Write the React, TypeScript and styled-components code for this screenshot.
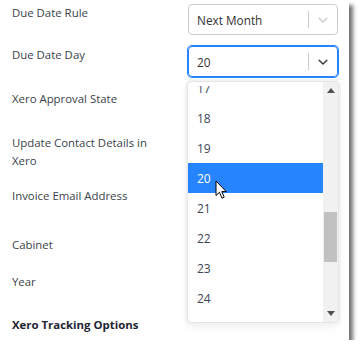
import { createGlobalStyle, styled } from "styled-components";

const GlobalStyle = createGlobalStyle`
  html, body {
    margin: 0;
    padding: 0;
    background: #ffffff;
  }
  body {
    font-family: "Open Sans", "Noto Sans", sans-serif;
  }
`;

const Panel = styled.div`
  width: 349px;
  height: 340px;
  background: #ffffff;
  box-shadow: 4px 5px 4px rgba(0, 0, 0, 0.55);
  box-sizing: border-box;
  padding: 4px 0 0 12px;
  overflow: hidden;
`;

const Field = styled.div<{ $h: number }>`
  display: grid;
  grid-template-columns: 176px 150px;
  align-items: start;
  height: ${(p) => p.$h}px;
`;

const Label = styled.div<{ $bold?: boolean }>`
  font-size: 11.4px;
  line-height: 18px;
  color: ${(p) => (p.$bold ? "#1e2433" : "#3a3f4a")};
  font-weight: ${(p) => (p.$bold ? 700 : 400)};
  width: 150px;
`;

const ControlCell = styled.div`
  position: relative;
`;

const SelectBox = styled.div<{ $focused?: boolean }>`
  height: 31px;
  box-sizing: border-box;
  border: 1px solid ${(p) => (p.$focused ? "#2684ff" : "#cccccc")};
  box-shadow: ${(p) => (p.$focused ? "0 0 0 1px #2684ff" : "none")};
  border-radius: 4px;
  display: flex;
  align-items: center;
  padding-left: 8px;
  font-size: 11.8px;
  color: #333;
`;

const SelectValue = styled.span`
  flex: 1;
`;

const Separator = styled.span`
  width: 1px;
  align-self: stretch;
  margin: 6px 0;
  background: #cccccc;
`;

const Indicator = styled.span<{ $dark?: boolean }>`
  width: 28px;
  display: flex;
  justify-content: center;
  align-items: center;
  color: ${(p) => (p.$dark ? "#333" : "#cccccc")};
`;

const Menu = styled.div`
  position: absolute;
  top: 36px;
  left: 0;
  width: 150px;
  height: 240px;
  background: #fff;
  border-radius: 4px;
  box-shadow: 0 0 0 1px #e4e4e4, 0 0 0 3px #f3f3f3, 0 4px 8px rgba(0, 0, 0, 0.08);
  display: flex;
  overflow: hidden;
  z-index: 2;
`;

const Viewport = styled.div`
  flex: 1;
  margin-top: 4px;
  overflow: hidden;
`;

const OptionList = styled.div`
  margin-top: -13px;
`;

const Option = styled.div<{ $active?: boolean }>`
  height: 30px;
  display: flex;
  align-items: center;
  padding-left: 9px;
  font-size: 12px;
  background: ${(p) => (p.$active ? "#2684ff" : "transparent")};
  color: ${(p) => (p.$active ? "#ffffff" : "#3d4656")};
`;

const Scrollbar = styled.div`
  width: 15px;
  background: #f1f1f1;
  display: flex;
  flex-direction: column;
`;

const ScrollArrow = styled.div`
  height: 17px;
  display: flex;
  align-items: center;
  justify-content: center;
`;

const Track = styled.div`
  flex: 1;
`;

const Thumb = styled.div`
  margin: 113px 1px 0 1px;
  height: 50px;
  background: #c1c1c1;
`;

const Cursor = styled.svg`
  position: absolute;
  left: 27px;
  top: 134px;
  z-index: 3;
`;

const Chevron = () => (
  <svg width="14" height="14" viewBox="0 0 20 20">
    <path
      d="M4.5 7.5 L10 13 L15.5 7.5"
      fill="none"
      stroke="currentColor"
      strokeWidth="2"
      strokeLinecap="round"
      strokeLinejoin="round"
    />
  </svg>
);

const Triangle = ({ up }: { up?: boolean }) => (
  <svg width="8" height="5" viewBox="0 0 8 5">
    <path d={up ? "M0 5 L4 0 L8 5 Z" : "M0 0 L8 0 L4 5 Z"} fill="#505050" />
  </svg>
);

const days = [17, 18, 19, 20, 21, 22, 23, 24, 25];

export default function App() {
  return (
    <>
      <GlobalStyle />
      <Panel>
        <Field $h={42}>
          <Label>Due Date Rule</Label>
          <ControlCell>
            <SelectBox>
              <SelectValue>Next Month</SelectValue>
              <Separator />
              <Indicator>
                <Chevron />
              </Indicator>
            </SelectBox>
          </ControlCell>
        </Field>
        <Field $h={44}>
          <Label>Due Date Day</Label>
          <ControlCell>
            <SelectBox $focused>
              <SelectValue>20</SelectValue>
              <Separator />
              <Indicator $dark>
                <Chevron />
              </Indicator>
            </SelectBox>
            <Menu>
              <Viewport>
                <OptionList>
                  {days.map((d) => (
                    <Option key={d} $active={d === 20}>
                      {d}
                    </Option>
                  ))}
                </OptionList>
              </Viewport>
              <Scrollbar>
                <ScrollArrow>
                  <Triangle up />
                </ScrollArrow>
                <Track>
                  <Thumb />
                </Track>
                <ScrollArrow>
                  <Triangle />
                </ScrollArrow>
              </Scrollbar>
            </Menu>
            <Cursor width="13" height="20" viewBox="0 0 13 20">
              <path
                d="M1 1 L1 15.5 L4.5 12.3 L7 18.2 L9.2 17.2 L6.8 11.6 L11.3 11.6 Z"
                fill="#ffffff"
                stroke="#000000"
                strokeWidth="1"
                strokeLinejoin="round"
              />
            </Cursor>
          </ControlCell>
        </Field>
        <Field $h={44}>
          <Label>Xero Approval State</Label>
        </Field>
        <Field $h={53}>
          <Label>Update Contact Details in Xero</Label>
        </Field>
        <Field $h={49}>
          <Label>Invoice Email Address</Label>
        </Field>
        <Field $h={37}>
          <Label>Cabinet</Label>
        </Field>
        <Field $h={43}>
          <Label>Year</Label>
        </Field>
        <Field $h={24}>
          <Label $bold>Xero Tracking Options</Label>
        </Field>
      </Panel>
    </>
  );
}
